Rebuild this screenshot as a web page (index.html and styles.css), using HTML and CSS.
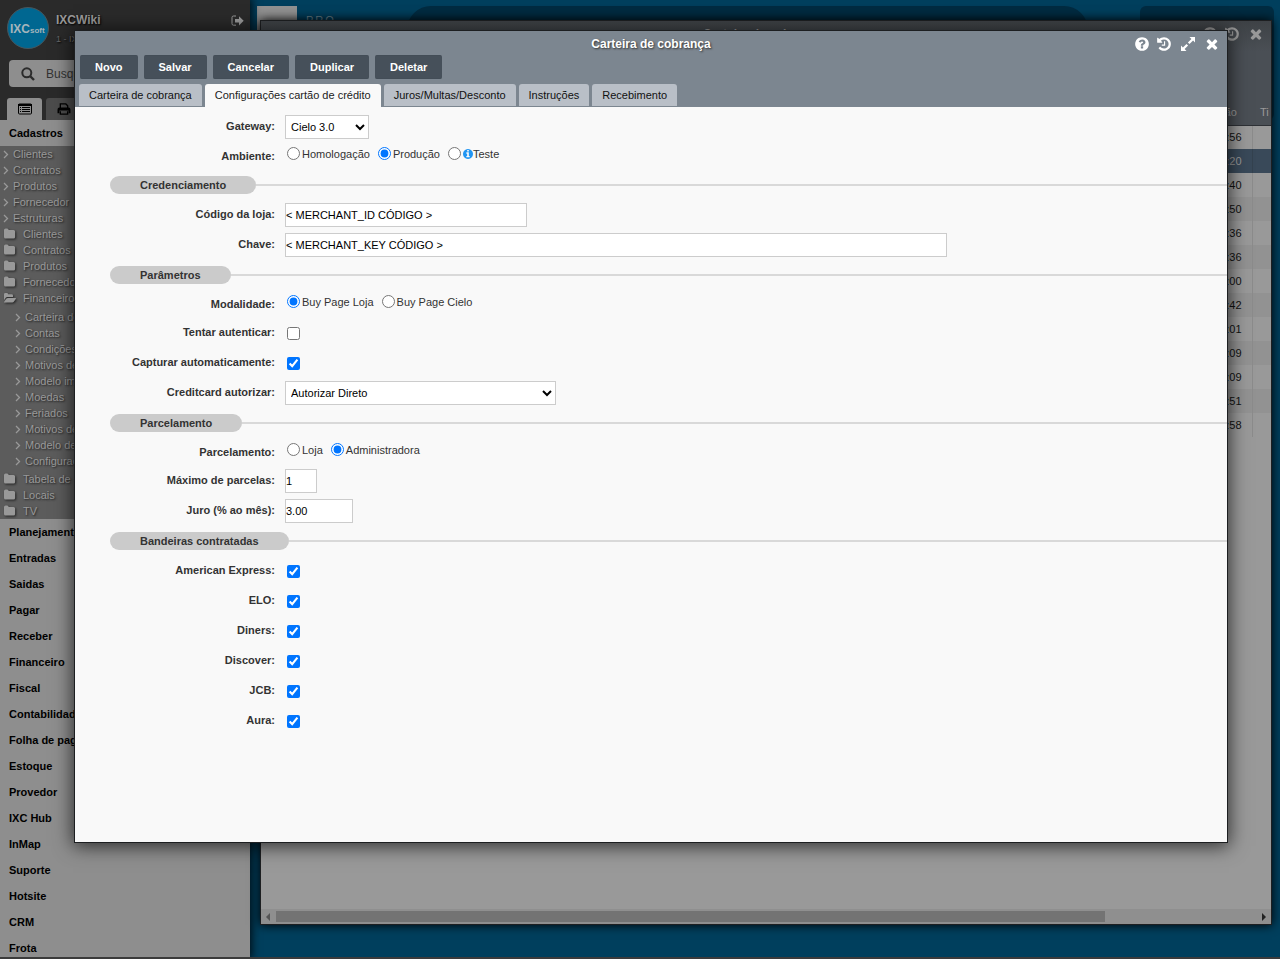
FILE: index.html
```html
<!DOCTYPE html>
<html lang="pt-BR">
<head>
<meta charset="utf-8">
<title>Carteira de cobrança</title>
<link rel="stylesheet" href="styles.css">
</head>
<body>
<svg class="defs" aria-hidden="true">
  <symbol id="i-times" viewBox="220 220 1352 1352"><path d="M1490 1322q0 40-28 68l-136 136q-28 28-68 28t-68-28l-294-294-294 294q-28 28-68 28t-68-28l-136-136q-28-28-28-68t28-68l294-294-294-294q-28-28-28-68t28-68l136-136q28-28 68-28t68 28l294 294 294-294q28-28 68-28t68 28l136 136q28 28 28 68t-28 68l-294 294 294 294q28 28 28 68z"/></symbol>
  <symbol id="i-history" viewBox="0 0 1792 1792"><path d="M1664 896q0 156-61 298t-164 245-245 164-298 61q-172 0-327-72.500t-264-204.500q-7-10-6.500-22.500t8.500-20.500l137-138q10-9 25-9 16 2 23 12 73 95 179 147t225 52q104 0 198.500-40.500t163.500-109.500 109.500-163.500 40.500-198.500-40.500-198.500-109.500-163.500-163.500-109.500-198.500-40.500q-98 0-188 35.500t-160 101.500l137 138q31 30 14 69-17 40-59 40h-448q-26 0-45-19t-19-45v-448q0-42 40-59 39-17 69 14l130 129q107-101 244.500-156.500t284.500-55.500q156 0 298 61t245 164 164 245 61 298zm-640-288v448q0 14-9 23t-23 9h-320q-14 0-23-9t-9-23v-64q0-14 9-23t23-9h224v-352q0-14 9-23t23-9h64q14 0 23 9t9 23z"/></symbol>
  <symbol id="i-help" viewBox="0 0 1792 1792"><path d="M1024 1376v-192q0-14-9-23t-23-9h-192q-14 0-23 9t-9 23v192q0 14 9 23t23 9h192q14 0 23-9t9-23zm256-672q0-88-55.500-163t-138.500-116-170-41q-243 0-371 213-15 24 8 42l132 100q7 6 19 6 16 0 25-12 53-68 86-92 34-24 86-24 48 0 85.500 26t37.500 59q0 38-20 61t-68 45q-63 28-115.500 86.500t-52.500 125.500v36q0 14 9 23t23 9h192q14 0 23-9t9-23q0-19 21.500-49.500t54.500-49.500q32-18 49-28.500t46-35 44.500-48 28-60.500 12.500-81zm384 192q0 209-103 385.500t-279.500 279.500-385.500 103-385.500-103-279.500-279.500-103-385.500 103-385.500 279.500-279.500 385.500-103 385.500 103 279.500 279.500 103 385.500z"/></symbol>
  <symbol id="i-info" viewBox="128 128 1536 1536"><path d="M1152 1376v-160q0-14-9-23t-23-9h-96v-512q0-14-9-23t-23-9h-320q-14 0-23 9t-9 23v160q0 14 9 23t23 9h96v320h-96q-14 0-23 9t-9 23v160q0 14 9 23t23 9h448q14 0 23-9t9-23zm-128-896v-160q0-14-9-23t-23-9h-192q-14 0-23 9t-9 23v160q0 14 9 23t23 9h192q14 0 23-9t9-23zm640 416q0 209-103 385.500t-279.500 279.500-385.500 103-385.500-103-279.500-279.500-103-385.500 103-385.500 279.500-279.500 385.500-103 385.500 103 279.500 279.500 103 385.500z"/></symbol>
  <symbol id="i-expand" viewBox="0 0 16 16"><path d="M9.500 1H15v5.500l-1.900-1.900-3.600 3.500-1.600-1.600 3.500-3.600zM6.500 15H1V9.500l1.900 1.900 3.600-3.500 1.600 1.600-3.500 3.600z"/></symbol>
  <symbol id="i-folder" viewBox="0 0 13 12"><path d="M1 2Q1 .5 2.500.5h1.700q1.400 0 1.400 1.500h5q1.500 0 1.500 1.500V9q0 1.500-1.500 1.500H2.500Q1 10.500 1 9z"/></symbol>
  <symbol id="i-open" viewBox="0 0 13 12"><path d="M1 8V2.300Q1 1 2.300 1h1.500q1.300 0 1.300 1.300h3.600q1.300 0 1.300 1.300V5H4.400q-1 0-1.700.8zM1 10l2.500-3.400Q4 6 4.800 6h7.700q.9 0 .4.800L10.800 9.700q-.5.800-1.400.8H1.300q-.7 0-.3-.5z"/></symbol>
  <symbol id="i-angle" viewBox="0 0 6 9"><path d="M1 1l3.500 3.500L1 8" fill="none" stroke="currentColor" stroke-width="1.300"/></symbol>
</svg>

<aside class="sidebar">
  <header class="brand">
    <svg class="logo" viewBox="0 0 42 42" role="img" aria-label="IXCsoft"><circle cx="21" cy="21" r="20.500" fill="#006791" stroke="#47565d"/><text x="3" y="26" class="logo-big">IXC</text><text x="23" y="26" class="logo-small">soft</text></svg>
    <div class="account"><strong>IXCWiki</strong><span>1 - IXC</span></div>
    <button class="exit" aria-label="Sair"><svg viewBox="0 0 13 12"><path d="M5 1H2.500Q1 1 1 2.500v6.200q0 1.500 1.500 1.500H5" fill="none" stroke="currentColor"/><path d="M4 4h4V1.200l4.700 4.600L8 10.400V7.600H4z" fill="currentColor"/></svg></button>
  </header>
  <label class="search"><svg viewBox="0 0 14 14"><circle cx="5.800" cy="5.800" r="4.500" fill="none" stroke="currentColor" stroke-width="2"/><path d="M9 9l4 4" stroke="currentColor" stroke-width="2.400"/></svg><input type="text" placeholder="Busque" aria-label="Busque"></label>
  <div class="side-tabs">
    <button class="active" aria-label="Menu"><svg viewBox="0 0 14 12"><path fill="none" stroke="currentColor" d="M.5 2q0-1 1-1h11q1 0 1 1v8q0 1-1 1h-11q-1 0-1-1z"/><path stroke="currentColor" d="M0 2h14" stroke-width="2"/><path stroke="currentColor" d="M2 4.500h1M4 4.500h8M2 6.500h1M4 6.500h8M2 8.500h1M4 8.500h8"/></svg></button>
    <button aria-label="Imprimir"><svg viewBox="0 0 14 13"><path d="M3 6V1h6l2 2v3M3 9v3h8V9" fill="none" stroke="currentColor" stroke-width="1.400"/><path d="M0 11V7q0-2 2-2h10q2 0 2 2v4h-2V8H2v3z" fill="currentColor"/></svg></button>
  </div>
  <nav>
    <a class="group" href="#">Cadastros</a>
    <div class="tree">
      <a href="#"><svg class="angle"><use href="#i-angle"/></svg>Clientes</a>
      <a href="#"><svg class="angle"><use href="#i-angle"/></svg>Contratos</a>
      <a href="#"><svg class="angle"><use href="#i-angle"/></svg>Produtos</a>
      <a href="#"><svg class="angle"><use href="#i-angle"/></svg>Fornecedor</a>
      <a href="#"><svg class="angle"><use href="#i-angle"/></svg>Estruturas</a>
      <a href="#"><svg class="folder"><use href="#i-folder"/></svg>Clientes</a>
      <a href="#"><svg class="folder"><use href="#i-folder"/></svg>Contratos</a>
      <a href="#"><svg class="folder"><use href="#i-folder"/></svg>Produtos</a>
      <a href="#"><svg class="folder"><use href="#i-folder"/></svg>Fornecedor</a>
      <a href="#"><svg class="folder"><use href="#i-open"/></svg>Financeiro</a>
      <div class="branch">
        <a href="#"><svg class="angle"><use href="#i-angle"/></svg>Carteira de</a>
        <a href="#"><svg class="angle"><use href="#i-angle"/></svg>Contas</a>
        <a href="#"><svg class="angle"><use href="#i-angle"/></svg>Condições</a>
        <a href="#"><svg class="angle"><use href="#i-angle"/></svg>Motivos de</a>
        <a href="#"><svg class="angle"><use href="#i-angle"/></svg>Modelo im</a>
        <a href="#"><svg class="angle"><use href="#i-angle"/></svg>Moedas</a>
        <a href="#"><svg class="angle"><use href="#i-angle"/></svg>Feriados</a>
        <a href="#"><svg class="angle"><use href="#i-angle"/></svg>Motivos de</a>
        <a href="#"><svg class="angle"><use href="#i-angle"/></svg>Modelo de</a>
        <a href="#"><svg class="angle"><use href="#i-angle"/></svg>Configuraç</a>
      </div>
      <a href="#"><svg class="folder"><use href="#i-folder"/></svg>Tabela de</a>
      <a href="#"><svg class="folder"><use href="#i-folder"/></svg>Locais</a>
      <a href="#"><svg class="folder"><use href="#i-folder"/></svg>TV</a>
    </div>
    <a class="group" href="#">Planejamento</a>
    <a class="group" href="#">Entradas</a>
    <a class="group" href="#">Saidas</a>
    <a class="group" href="#">Pagar</a>
    <a class="group" href="#">Receber</a>
    <a class="group" href="#">Financeiro</a>
    <a class="group" href="#">Fiscal</a>
    <a class="group" href="#">Contabilidade</a>
    <a class="group" href="#">Folha de pag.</a>
    <a class="group" href="#">Estoque</a>
    <a class="group" href="#">Provedor</a>
    <a class="group" href="#">IXC Hub</a>
    <a class="group" href="#">InMap</a>
    <a class="group" href="#">Suporte</a>
    <a class="group" href="#">Hotsite</a>
    <a class="group" href="#">CRM</a>
    <a class="group" href="#">Frota</a>
  </nav>
</aside>

<main class="desktop">
  <div class="tile"></div>
  <span class="pro">PRO —</span>
  <div class="panel wide"></div>
  <div class="panel side"></div>
</main>

<section class="window back">
  <div class="back-head">
    <span class="back-title">Carteira de cobrança</span>
    <div class="tools">
      <button aria-label="Ajuda"><svg><use href="#i-help"/></svg></button>
      <button aria-label="Histórico"><svg><use href="#i-history"/></svg></button>
      <button class="close" aria-label="Fechar"><svg><use href="#i-times"/></svg></button>
    </div>
  </div>
  <table class="grid">
    <thead><tr><th>ão</th><th>Ti</th></tr></thead>
    <tbody>
      <tr><td>:56</td><td></td></tr>
      <tr class="selected"><td>:20</td><td></td></tr>
      <tr><td>:40</td><td></td></tr>
      <tr><td>:50</td><td></td></tr>
      <tr><td>:36</td><td></td></tr>
      <tr><td>:36</td><td></td></tr>
      <tr><td>:00</td><td></td></tr>
      <tr><td>:42</td><td></td></tr>
      <tr><td>:01</td><td></td></tr>
      <tr><td>:09</td><td></td></tr>
      <tr><td>:09</td><td></td></tr>
      <tr><td>:51</td><td></td></tr>
      <tr><td>:58</td><td></td></tr>
    </tbody>
  </table>
  <div class="scrollbar"><i class="arrow left"></i><div class="track"><div class="thumb"></div></div><i class="arrow right"></i></div>
</section>

<section class="window front" role="dialog" aria-labelledby="title">
  <header class="bar">
    <div class="title-row">
      <h1 id="title">Carteira de cobrança</h1>
      <div class="tools">
        <button aria-label="Ajuda"><svg><use href="#i-help"/></svg></button>
        <button aria-label="Histórico"><svg><use href="#i-history"/></svg></button>
        <button class="expand" aria-label="Expandir"><svg><use href="#i-expand"/></svg></button>
        <button class="close" aria-label="Fechar"><svg><use href="#i-times"/></svg></button>
      </div>
    </div>
    <div class="actions"><button>Novo</button><button>Salvar</button><button>Cancelar</button><button>Duplicar</button><button>Deletar</button></div>
    <div class="tabs" role="tablist"><button role="tab">Carteira de cobrança</button><button role="tab" aria-selected="true" class="active">Configurações cartão de crédito</button><button role="tab">Juros/Multas/Desconto</button><button role="tab">Instruções</button><button role="tab">Recebimento</button></div>
  </header>
  <form class="form">
    <div class="row"><label for="gateway">Gateway:</label><select id="gateway" class="w-gateway"><option>Cielo 3.0</option></select></div>
    <div class="row radios" role="radiogroup" aria-labelledby="l-amb"><span class="name" id="l-amb">Ambiente:</span><div class="options"><label><input type="radio" name="amb">Homologação</label><label><input type="radio" name="amb" checked>Produção</label><label><input type="radio" name="amb"><svg class="info"><use href="#i-info"/></svg>Teste</label></div></div>
    <h2><span>Credenciamento</span></h2>
    <div class="row"><label for="loja">Código da loja:</label><input type="text" id="loja" class="w-loja" value="&lt; MERCHANT_ID CÓDIGO &gt;"></div>
    <div class="row"><label for="chave">Chave:</label><input type="text" id="chave" class="w-chave" value="&lt; MERCHANT_KEY CÓDIGO &gt;"></div>
    <h2><span>Parâmetros</span></h2>
    <div class="row radios" role="radiogroup" aria-labelledby="l-mod"><span class="name" id="l-mod">Modalidade:</span><div class="options"><label><input type="radio" name="mod" checked>Buy Page Loja</label><label><input type="radio" name="mod">Buy Page Cielo</label></div></div>
    <div class="row"><label for="tentar">Tentar autenticar:</label><input type="checkbox" id="tentar"></div>
    <div class="row"><label for="capturar">Capturar automaticamente:</label><input type="checkbox" id="capturar" checked></div>
    <div class="row"><label for="autorizar">Creditcard autorizar:</label><select id="autorizar" class="w-autorizar"><option>Autorizar Direto</option></select></div>
    <h2><span>Parcelamento</span></h2>
    <div class="row radios" role="radiogroup" aria-labelledby="l-par"><span class="name" id="l-par">Parcelamento:</span><div class="options"><label><input type="radio" name="par">Loja</label><label><input type="radio" name="par" checked>Administradora</label></div></div>
    <div class="row"><label for="max">Máximo de parcelas:</label><input type="text" id="max" class="w-max" value="1"></div>
    <div class="row"><label for="juro">Juro (% ao mês):</label><input type="text" id="juro" class="w-juro" value="3.00"></div>
    <h2><span>Bandeiras contratadas</span></h2>
    <div class="row"><label for="amex">American Express:</label><input type="checkbox" id="amex" checked></div>
    <div class="row"><label for="elo">ELO:</label><input type="checkbox" id="elo" checked></div>
    <div class="row"><label for="diners">Diners:</label><input type="checkbox" id="diners" checked></div>
    <div class="row"><label for="discover">Discover:</label><input type="checkbox" id="discover" checked></div>
    <div class="row"><label for="jcb">JCB:</label><input type="checkbox" id="jcb" checked></div>
    <div class="row"><label for="aura">Aura:</label><input type="checkbox" id="aura" checked></div>
  </form>
</section>
</body>
</html>
```
FILE: styles.css
```css
* { box-sizing: border-box; }
body, button, input, select { font-family: "Liberation Sans", Arial, sans-serif; font-size: 11px; }
body { display: flex; height: 100vh; margin: 0; overflow: hidden; background: #003f5d; border-bottom: 2px solid #3b3b3b; color: #333; }
button { border: 0; padding: 0; background: none; color: inherit; cursor: pointer; }
a { color: inherit; text-decoration: none; }
svg { fill: currentColor; }
.defs { position: absolute; width: 0; height: 0; }

/* Sidebar */
.sidebar { flex: 0 0 250px; overflow: hidden; background: #2a2a2a; box-shadow: 0 0 8px 2px #001018; z-index: 1; }
.brand { display: flex; height: 60px; padding: 7px 6px 0 7px; color: #999; }
.logo { width: 42px; height: 42px; }
.logo text { fill: #a5b5bc; font-weight: bold; }
.logo .logo-big { font-size: 12px; }
.logo .logo-small { font-size: 8px; }
.account { display: flex; flex: 1; flex-direction: column; gap: 7px; padding: 6px 0 0 7px; line-height: 14px; text-shadow: 1px 1px 2px #000; }
.account strong { font-size: 12px; }
.account span { font-size: 9px; line-height: 10px; color: #666; }
.exit { align-self: flex-start; height: 28px; }
.exit svg { display: block; width: 13px; height: 12px; }
.search { display: flex; align-items: center; gap: 9px; height: 27px; margin: 0 9px; padding-left: 12px; border-radius: 4px; background: #8e8e8e; color: #2b2b2b; }
.search svg { width: 14px; height: 14px; }
.search input { width: 150px; border: 0; background: none; outline: 0; font-size: 12px; }
.search input::placeholder { color: #333; }
.side-tabs { display: flex; gap: 4px; padding: 11px 7px 0; }
.side-tabs button { display: grid; place-items: center; width: 35px; height: 22px; border-radius: 3px 3px 0 0; background: #4c4c4c; color: #000; }
.side-tabs .active { background: #8e8e8e; }
.side-tabs svg { width: 14px; height: 12px; }
.group { display: block; padding-left: 9px; background: #8e8e8e; color: #000; font-weight: bold; line-height: 26px; }
.tree { background: #5c5c5c; color: #999; text-shadow: 1px 1px 2px #222; }
.tree a { display: flex; align-items: center; height: 16px; padding-left: 3px; line-height: 16px; }
.branch { padding: 3px 0 2px 12px; }
.angle { width: 6px; height: 9px; margin-right: 4px; }
.folder { width: 13px; height: 12px; margin-right: 7px; filter: drop-shadow(1px 1px 1px #222); }

/* Desktop behind the windows */
.desktop { display: flex; flex: 1; height: 120px; padding: 6px 6px 0 7px; }
.tile { width: 40px; height: 60px; background: #929292; }
.pro { width: 110px; padding: 8px 0 0 9px; color: #6f8590; font-size: 11px; letter-spacing: 2px; }
.panel { background: #002c42; }
.wide { flex: 1; margin-right: 52px; border-radius: 24px 24px 0 0; }
.side { width: 134px; border-radius: 6px; }

/* Windows */
.window { position: absolute; display: flex; flex-direction: column; border: 1px solid #1d1f21; z-index: 2; }
.tools { display: flex; gap: 6px; align-items: flex-start; }
.tools svg { display: block; width: 16px; height: 16px; }
.tools .expand { margin-left: 2px; }
.tools .close { margin: 2px 2px 0 4px; }
.tools .close svg { width: 12px; height: 12px; }
.back { top: 20px; right: 8px; bottom: 34px; left: 260px; background: #999; box-shadow: 0 0 10px #000; }
.back-head { display: flex; height: 79px; padding: 5px 7px 0 442px; background: linear-gradient(#3e4246, #4a4f55 30px); color: #999; }
.back-title { flex: 1; padding-top: 1px; font-size: 12px; font-weight: bold; }
.grid { width: 100%; border-collapse: collapse; }
.grid th { height: 25px; padding: 0 0 0 8px; border-bottom: 1px solid #2e3136; background: #4a4f55; color: #999; font-weight: normal; text-align: left; }
.grid th:first-child { padding-right: 15px; text-align: right; }
.grid th:last-child { width: 19px; }
.grid td { height: 24px; padding: 0 10px 0 0; border-right: 1px solid #8b8b8b; color: #111; text-align: right; }
.grid td:last-child { padding: 0; border-right: 0; }
.grid tbody tr:nth-child(even) { background: #929292; }
.grid tbody tr.selected { background: #394959; }
.grid .selected td { color: #999; border-color: #34424f; }
.scrollbar { display: flex; align-items: center; height: 15px; margin-top: auto; padding: 0 5px; background: #8f8f8f; }
.track { flex: 1; margin: 0 11px 0 6px; }
.thumb { width: 85%; height: 11px; background: #737373; }
.arrow { border: 4px solid transparent; }
.arrow.left { border-left: 0; border-right-color: #555; }
.arrow.right { border-right: 0; border-left-color: #222; }

.front { top: 30px; right: 52px; bottom: 116px; left: 74px; background: #f9f9f9; box-shadow: 0 2px 18px 1px rgba(0, 0, 0, .7); z-index: 3; }
.bar { padding: 0 4px; background: #7c8690; }
.title-row { display: grid; grid-template-columns: 1fr auto 1fr; height: 24px; padding-top: 5px; color: #fff; }
.title-row h1 { grid-column: 2; margin: 0; font-size: 12px; line-height: 16px; text-shadow: 1px 1px 2px #333; }
.title-row .tools { justify-self: end; padding-right: 3px; }
.actions { display: flex; gap: 6px; padding: 0 1px; }
.actions button { height: 24px; padding: 0 15px; border: 1px solid #434d57; border-width: 1px 0; border-radius: 2px; background: #46505a; color: #fff; font-weight: bold; }
.tabs { display: flex; gap: 3px; height: 28px; padding-top: 5px; }
.tabs button { height: 22px; padding: 0 10px; border-radius: 3px 3px 0 0; background: #b9bfc7; color: #111; }
.tabs .active { height: 23px; padding-bottom: 1px; background: #f9f9f9; color: #222; }

/* Form */
.form { flex: 1; padding-top: 5px; overflow: hidden; }
.row { display: grid; grid-template-columns: 200px 1fr; column-gap: 10px; align-items: center; justify-items: start; height: 30px; }
.row > label, .name { justify-self: end; padding-bottom: 2px; font-weight: bold; }
.radios { height: 28px; }
.radios .name { padding: 0; }
.options { display: flex; gap: 6px; padding-bottom: 4px; }
.options label { display: flex; align-items: center; }
.options input { margin: 0 2px 1px; }
.info { width: 10px; height: 10px; color: #2196f3; }
.row input[type="checkbox"] { margin: 0 2px; }
.row input[type="text"], select { height: 24px; border: 1px solid #ccc; border-radius: 0; background: #fff; color: #000; }
.row input[type="text"] { padding: 0; }
select { padding: 0 1px; }
.w-gateway { width: 84px; }
.w-loja { width: 242px; }
.w-chave { width: 662px; }
.w-autorizar { width: 271px; }
.w-max { width: 32px; }
.w-juro { width: 68px; }
h2 { display: flex; align-items: center; height: 30px; margin: 0 0 0 35px; font-size: 11px; }
h2 span { padding: 0 30px; border-radius: 9px; background: #cbcbcb; line-height: 18px; }
h2::after { content: ""; flex: 1; height: 2px; background: #d9d9d9; }
```
